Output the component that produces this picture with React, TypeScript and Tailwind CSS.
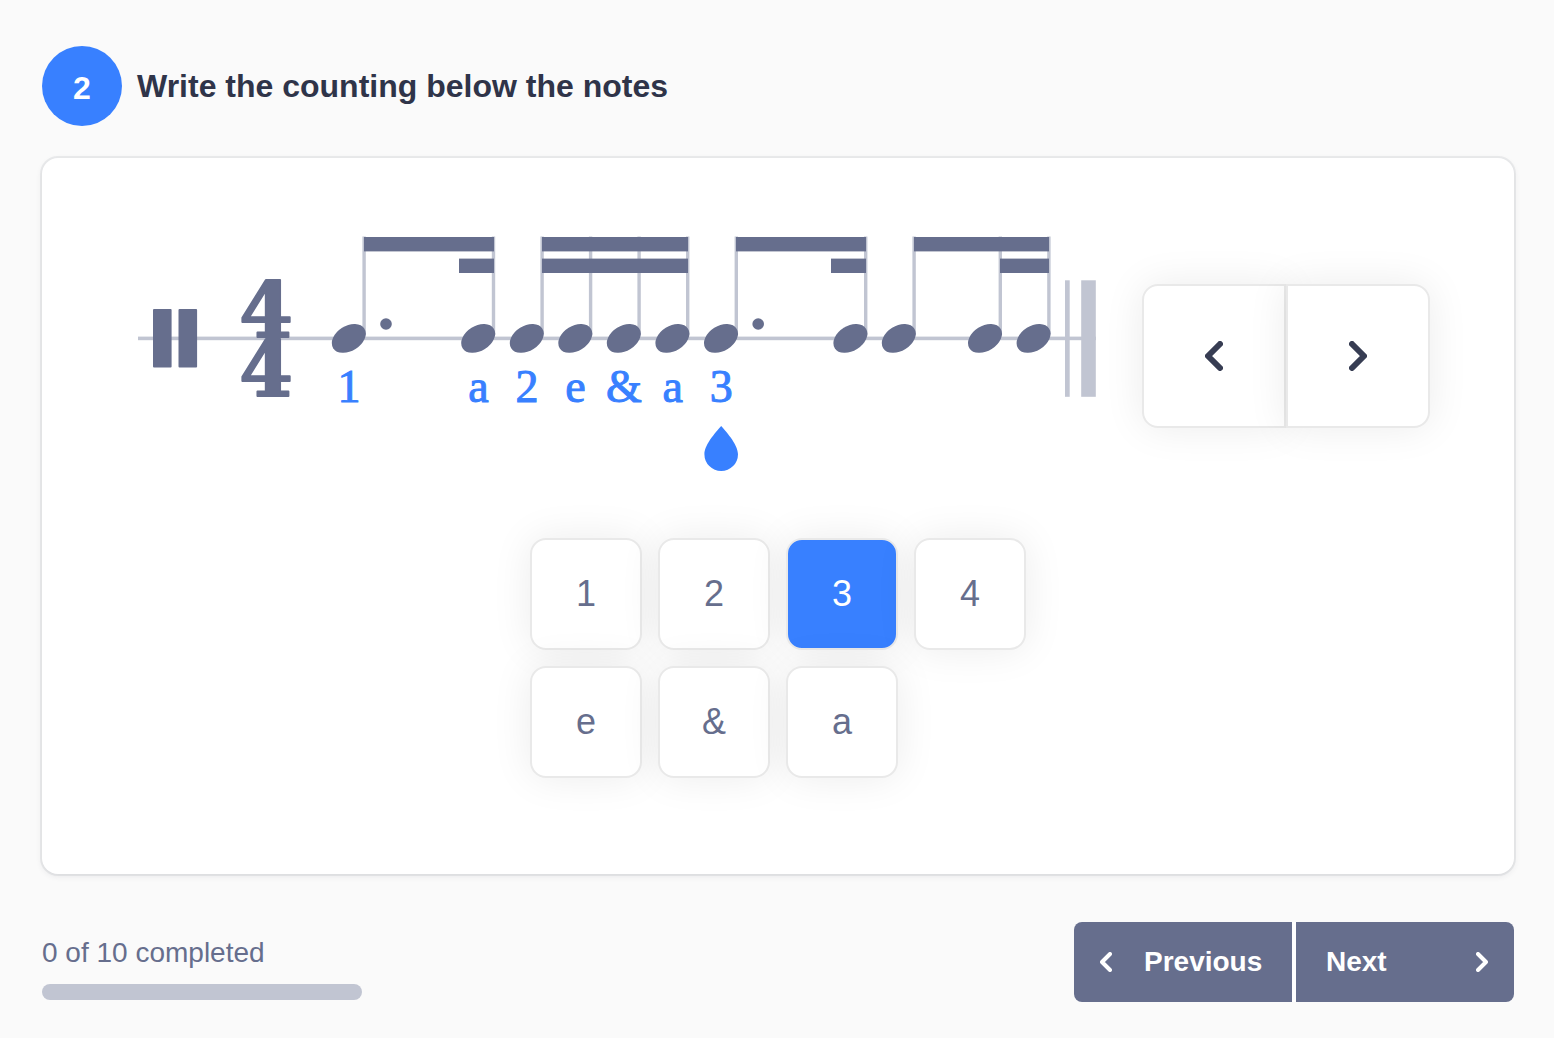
import { useState } from "react"

const STEM_TOP = 1
const LINE_Y = 103

type Beam = { x1: number; x2: number; level: number }

const notes = [
  { x: 211, count: "1", dotted: true },
  { x: 340.4, count: "a" },
  { x: 389, count: "2" },
  { x: 437.5, count: "e" },
  { x: 486, count: "&" },
  { x: 534.6, count: "a" },
  { x: 583.2, count: "3", dotted: true },
  { x: 712.6, count: "" },
  { x: 761, count: "" },
  { x: 847.2, count: "" },
  { x: 895.8, count: "" },
]

const beams: Beam[] = [
  { x1: 226, x2: 356, level: 0 },
  { x1: 321, x2: 356, level: 1 },
  { x1: 404, x2: 550, level: 0 },
  { x1: 404, x2: 550, level: 1 },
  { x1: 598, x2: 728, level: 0 },
  { x1: 693, x2: 728, level: 1 },
  { x1: 776, x2: 911, level: 0 },
  { x1: 862, x2: 911, level: 1 },
]

const choices = ["1", "2", "3", "4", "e", "&", "a"]

function Chevron({ direction, className }: { direction: "left" | "right"; className: string }) {
  return (
    <svg viewBox="0 0 18 30" className={className} fill="none" aria-hidden="true">
      <path
        d={direction === "left" ? "M15 3L3 15L15 27" : "M3 3L15 15L3 27"}
        stroke="currentColor"
        strokeWidth="6"
        strokeLinecap="round"
        strokeLinejoin="round"
      />
    </svg>
  )
}

function Rhythm({ selected, counts }: { selected: number; counts: string[] }) {
  return (
    <svg viewBox="0 0 960 240" className="min-w-0 flex-1" role="img" aria-label="Rhythm in 4/4">
      {/* staff line and final barline */}
      <g fill="#c1c5d2">
        <rect x="0" y="100.6" width="958" height="3.6" />
        <rect x="927" y="44.3" width="4.7" height="116.5" />
        <rect x="943.2" y="44.3" width="14.6" height="116.5" />
      </g>

      {/* percussion clef */}
      <g fill="#666e8d">
        <rect x="15" y="73" width="18.6" height="58.5" rx="1" />
        <rect x="40.5" y="73" width="18.6" height="58.5" rx="1" />
      </g>

      <g
        className="font-['DejaVu_Serif',serif] text-[77px] font-bold"
        fill="#666e8d"
        stroke="#666e8d"
        strokeWidth="2"
        strokeLinejoin="round"
        textAnchor="middle"
      >
        <text x="128" y="101">4</text>
        <text x="128" y="160">4</text>
      </g>

      {notes.map((note) => (
        <rect key={note.x} x={note.x + 13.4} y={STEM_TOP - 0.5} width="3.4" height="98" fill="#c1c5d2" />
      ))}
      {beams.map((beam, i) => (
        <rect
          key={i}
          x={beam.x1}
          y={STEM_TOP + beam.level * 21.6}
          width={beam.x2 - beam.x1}
          height="14.4"
          fill="#666e8d"
        />
      ))}
      {notes.map((note, i) => (
        <g key={note.x}>
          <ellipse
            rx="18.4"
            ry="12.6"
            fill="#666e8d"
            transform={`translate(${note.x - 0.2} ${LINE_Y - 0.6}) rotate(-32)`}
          />
          {note.dotted && <circle cx={note.x + 37} cy="88" r="5.8" fill="#666e8d" />}
          <text
            x={note.x}
            y="166"
            textAnchor="middle"
            fill="#3880ff"
            stroke="#3880ff"
            className="font-['Liberation_Serif',serif] text-[46px]"
          >
            {counts[i]}
          </text>
        </g>
      ))}

      {/* cursor under the current note */}
      <path
        d="M0 0C3 3.500 16.800 18 16.800 28.200A16.800 16.800 0 0 1 -16.800 28.200C-16.800 18 -3 3.500 0 0Z"
        fill="#3880ff"
        transform={`translate(${notes[selected].x} 190)`}
      />
    </svg>
  )
}

export default function App() {
  const [selected, setSelected] = useState(6)
  const [counts, setCounts] = useState(notes.map((note) => note.count))

  const move = (step: number) =>
    setSelected((current) => Math.min(notes.length - 1, Math.max(0, current + step)))

  const choose = (value: string) =>
    setCounts((current) => current.map((count, i) => (i === selected ? value : count)))

  return (
    <div className="min-h-screen bg-[#fafafa] pt-[46px] pr-10 pb-9 pl-[42px] font-['Liberation_Sans',Arial,sans-serif]">
      <header className="flex items-center gap-[15px]">
        <div className="flex size-20 shrink-0 items-center justify-center rounded-full bg-[#3880ff] pt-1 text-[32px] font-bold text-white">
          2
        </div>
        <h1 className="text-[32px] font-bold text-[#2f3449]">Write the counting below the notes</h1>
      </header>

      <main className="mt-8 rounded-2xl bg-white pt-[78px] pb-24 shadow-[0_0_0_2px_rgba(47,52,73,0.07),0_2px_6px_rgba(47,52,73,0.1)]">
        <div className="flex items-center gap-11 pr-[84px] pl-24">
          <Rhythm selected={selected} counts={counts} />
          <div className="flex shrink-0 text-[#373d53]">
            <button
              type="button"
              aria-label="Previous note"
              onClick={() => move(-1)}
              className="flex size-36 items-center justify-center rounded-l-2xl border-2 border-[#e9e9e9] bg-white shadow-[0_0_40px_rgba(0,0,0,0.08)]"
            >
              <Chevron direction="left" className="h-[30px] w-[18px]" />
            </button>
            <button
              type="button"
              aria-label="Next note"
              onClick={() => move(1)}
              className="flex size-36 items-center justify-center rounded-r-2xl border-2 border-[#e9e9e9] bg-white shadow-[0_0_40px_rgba(0,0,0,0.08)]"
            >
              <Chevron direction="right" className="h-[30px] w-[18px]" />
            </button>
          </div>
        </div>

        <div className="mx-auto mt-[62px] grid w-fit grid-cols-4 gap-4">
          {choices.map((choice) => (
            <button
              key={choice}
              type="button"
              aria-pressed={counts[selected] === choice}
              onClick={() => choose(choice)}
              className="size-28 rounded-2xl border-2 border-[#e9e9e9] bg-white text-4xl text-[#666e8d] shadow-[0_0_40px_rgba(0,0,0,0.08)] aria-pressed:bg-[#3880ff] aria-pressed:text-white"
            >
              {choice}
            </button>
          ))}
        </div>
      </main>

      <footer className="mt-12 flex items-center justify-between">
        <div className="w-80 pt-3">
          <p id="progress-label" className="text-[28px] leading-[34px] text-[#666e8d]">
            0 of 10 completed
          </p>
          <div
            role="progressbar"
            aria-labelledby="progress-label"
            aria-valuenow={0}
            aria-valuemin={0}
            aria-valuemax={10}
            className="mt-[14px] h-4 rounded-full bg-[#c1c5d2]"
          />
        </div>
        <nav className="flex gap-1 overflow-hidden rounded-lg bg-white text-[28px] font-bold text-white">
          <button type="button" className="flex h-20 w-[218px] items-center gap-8 bg-[#666e8d] px-[26px]">
            <Chevron direction="left" className="h-5 w-3" />
            Previous
          </button>
          <button type="button" className="flex h-20 w-[218px] items-center justify-between bg-[#666e8d] pr-[26px] pl-[30px]">
            Next
            <Chevron direction="right" className="h-5 w-3" />
          </button>
        </nav>
      </footer>
    </div>
  )
}
